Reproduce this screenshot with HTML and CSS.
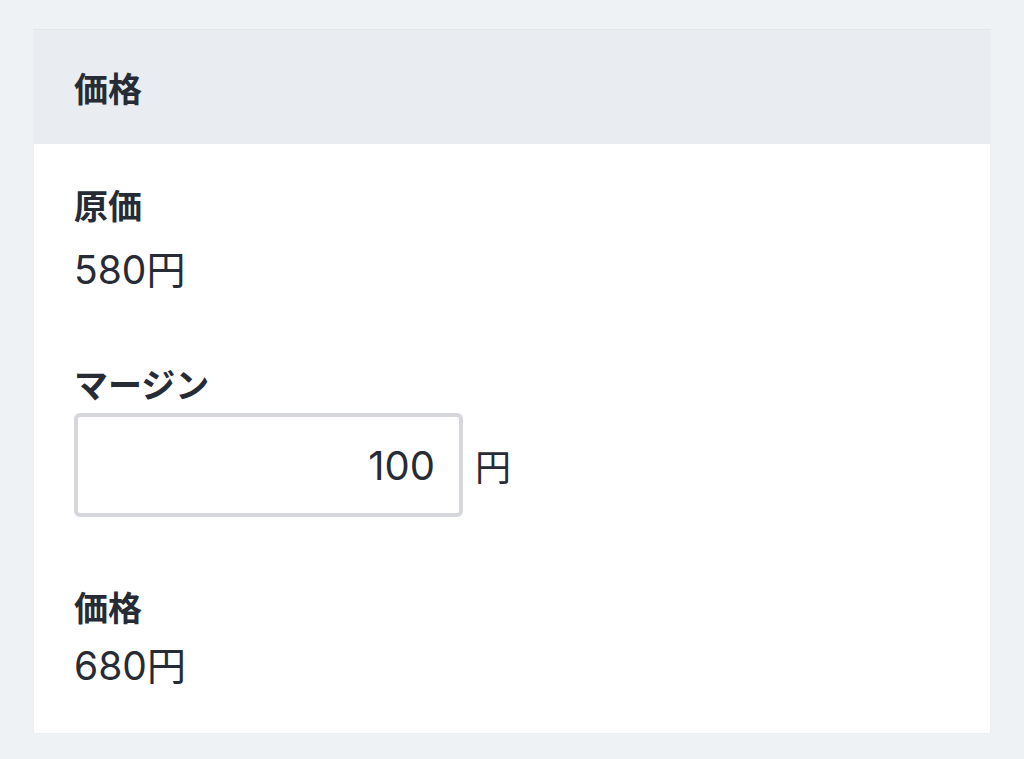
FILE: index.html
```html
<!DOCTYPE html>
<html lang="ja">
<head>
<meta charset="utf-8">
<title>価格</title>
<link rel="stylesheet" href="styles.css">
</head>
<body>
<section class="card">
  <header class="card-header">価格</header>
  <div class="card-body">
    <div class="field">
      <div class="label">原価</div>
      <div class="value">580円</div>
    </div>
    <div class="field field-margin">
      <label class="label" for="margin">マージン</label>
      <div class="input-row">
        <input id="margin" class="num-input" type="text" value="100">
        <span class="unit">円</span>
      </div>
    </div>
    <div class="field">
      <div class="label">価格</div>
      <div class="value value-tight">680円</div>
    </div>
  </div>
</section>
</body>
</html>
```

FILE: styles.css
```css
html, body {
  margin: 0;
  padding: 0;
}

body {
  background: #eff2f5;
  padding: 29px 33px;
  font-family: "Inter", "Noto Sans CJK JP", sans-serif;
  color: #262b35;
}

.card {
  background: #ffffff;
  border: 1px solid #eceff2;
  border-top-color: #e2e5e9;
}

.card-header {
  height: 114px;
  background: #e9ecf0;
  display: flex;
  align-items: center;
  padding: 0 40px;
  font-family: "Noto Sans CJK JP", sans-serif;
  font-weight: 700;
  font-size: 34px;
}

.card-body {
  padding: 37px 40px 43px;
  display: flex;
  flex-direction: column;
  gap: 66px;
}

.field {
  display: flex;
  flex-direction: column;
}

.label {
  font-family: "Noto Sans CJK JP", sans-serif;
  font-weight: 700;
  font-size: 34px;
  line-height: 48px;
}

.value {
  font-size: 39px;
  line-height: 48px;
  margin-top: 17px;
}

.value-tight {
  margin-top: 11px;
}

.field-margin .label {
  margin-bottom: 5px;
}

.input-row {
  display: flex;
  align-items: center;
  gap: 12px;
}

.num-input {
  box-sizing: border-box;
  width: 389px;
  height: 104px;
  border: 4px solid #d6d7dd;
  border-radius: 6px;
  padding: 0 24px;
  text-align: right;
  font-family: "Inter", sans-serif;
  font-size: 40px;
  color: #262b35;
  background: #ffffff;
  outline: none;
}

.unit {
  font-family: "Noto Sans CJK JP", sans-serif;
  font-size: 36px;
}
```
